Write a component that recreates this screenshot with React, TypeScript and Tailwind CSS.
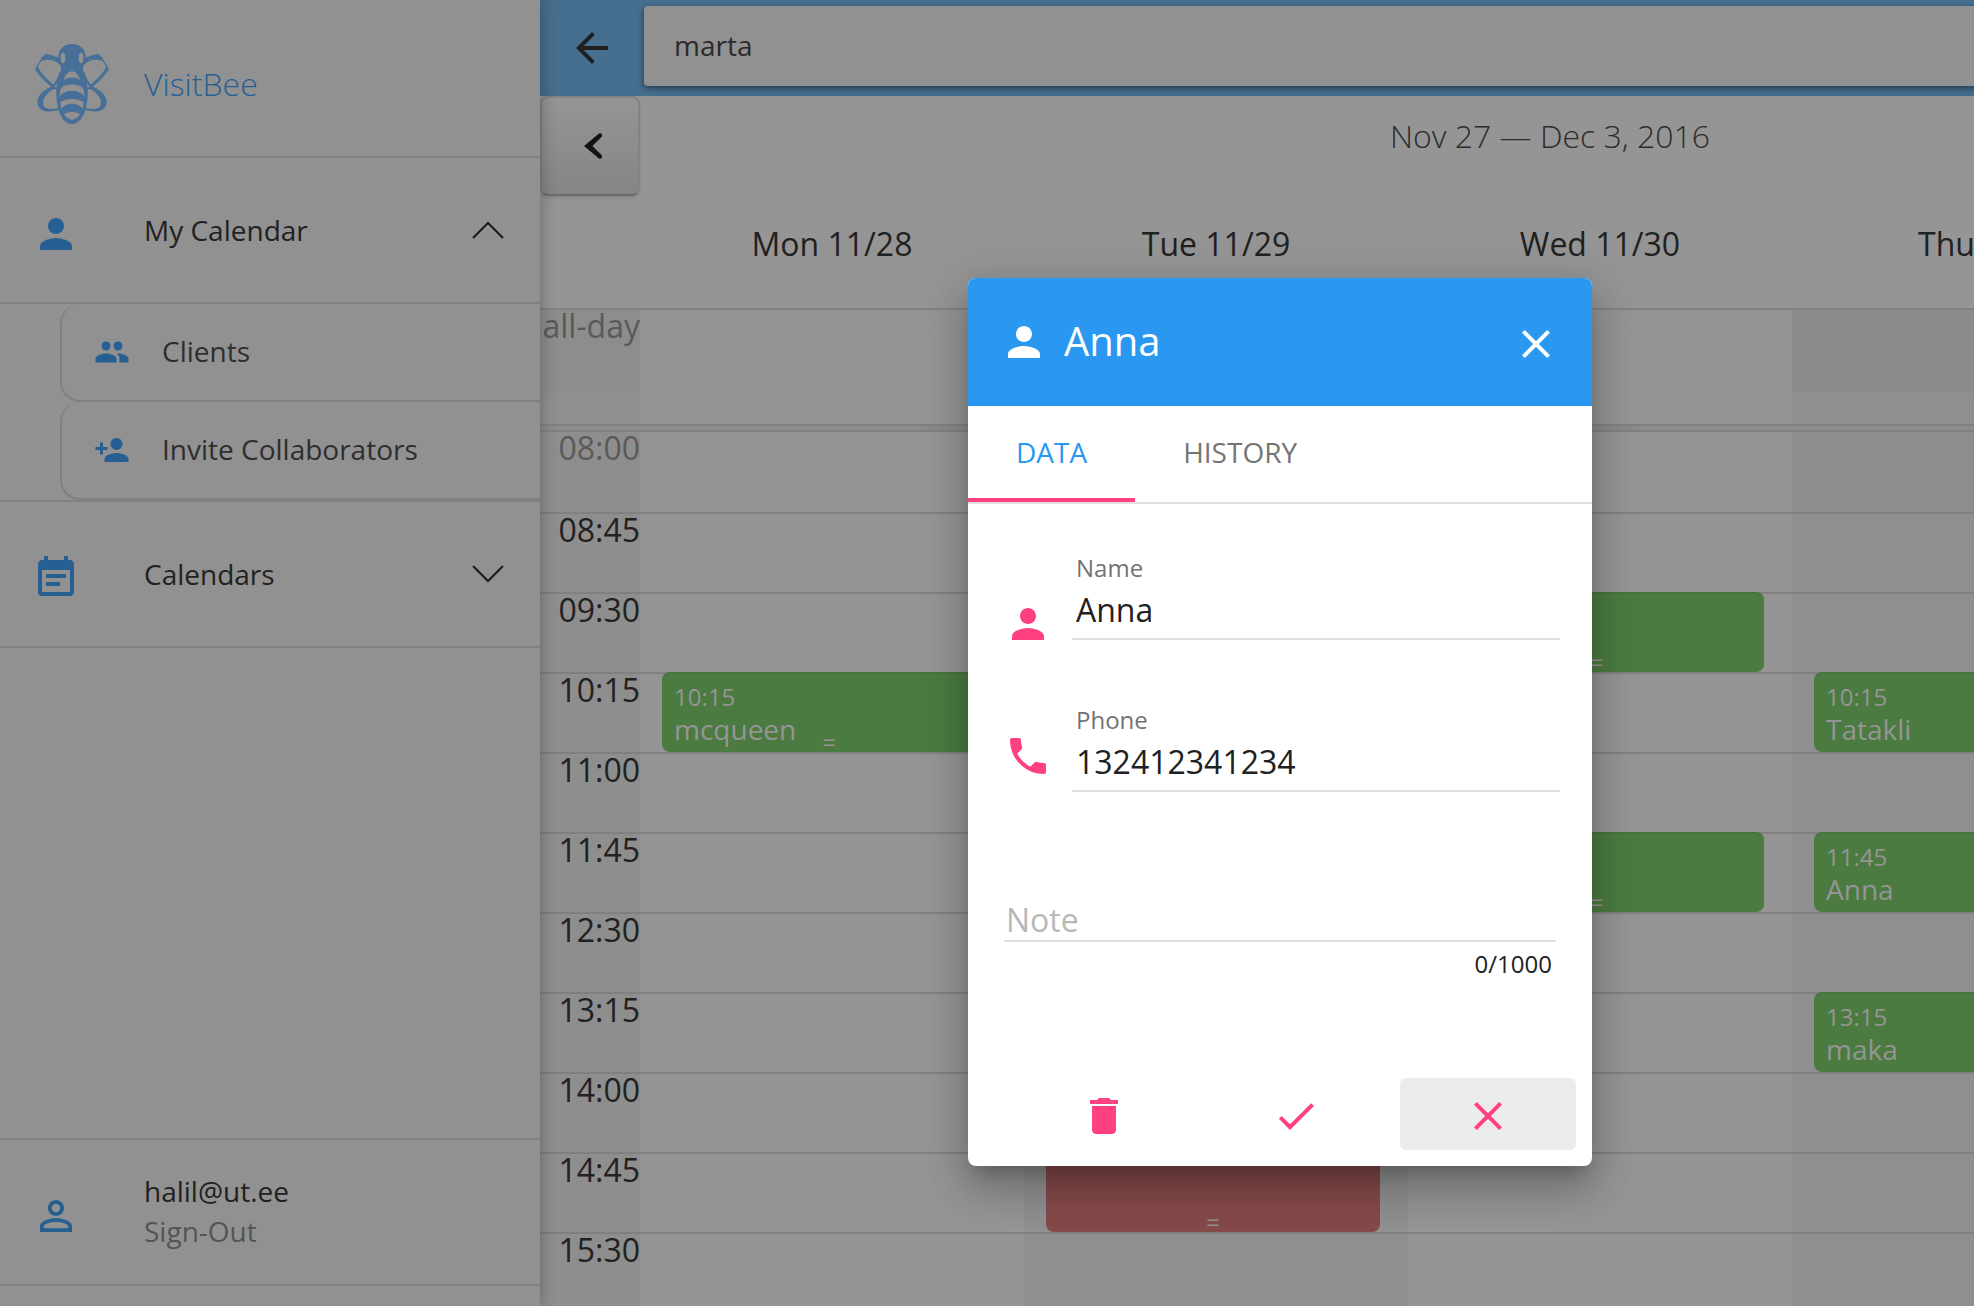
import React from 'react';
import {
  MdPerson,
  MdPeople,
  MdPersonAdd,
  MdEventNote,
  MdPersonOutline,
  MdArrowBack,
  MdClose,
  MdCheck,
  MdDelete,
  MdPhone,
} from 'react-icons/md';

type CalendarEvent = { time?: string; title?: string; tone: 'green' | 'red' };

const days = ['Mon 11/28', 'Tue 11/29', 'Wed 11/30', 'Thu 12/1', 'Fri 12/2'];
const shaded = [false, true, false, true, false];

const slots = [
  '08:00', '08:45', '09:30', '10:15', '11:00', '11:45',
  '12:30', '13:15', '14:00', '14:45', '15:30',
];

const events: Record<string, CalendarEvent> = {
  '10:15-0': { time: '10:15', title: 'mcqueen', tone: 'green' },
  '14:45-1': { tone: 'red' },
  '09:30-2': { tone: 'green' },
  '11:45-2': { tone: 'green' },
  '10:15-3': { time: '10:15', title: 'Tatakli', tone: 'green' },
  '11:45-3': { time: '11:45', title: 'Anna', tone: 'green' },
  '13:15-3': { time: '13:15', title: 'maka', tone: 'green' },
};

function BeeWing() {
  return (
    <g>
      <path
        fill="#476f97"
        fillRule="evenodd"
        d="M120 84 C106 80 94 74 78 71 L66 82 L45 118 C54 134 76 156 94 170 C74 178 54 192 52 214 C51 230 62 240 76 244 C92 245 106 243 118 240 L114 234 C100 237 88 238 78 234 C68 230 67 218 72 206 C80 190 94 180 106 174 L102 166 C84 150 66 134 55 114 C54 102 62 92 76 90 C92 87 108 92 120 104 Z"
      />
      <path fill="none" stroke="#476f97" strokeWidth="7" d="M99 170 C108 160 116 148 122 132" />
      <path fill="none" stroke="#476f97" strokeWidth="6" d="M98 171 L114 178" />
    </g>
  );
}

function BeeLogo() {
  return (
    <svg viewBox="45 42 222 240" className="h-20 w-[74px]" aria-hidden="true">
      <BeeWing />
      <g transform="translate(312 0) scale(-1 1)">
        <BeeWing />
      </g>
      <path
        fill="#476f97"
        d="M156 42 C132 42 115 58 115 82 C115 98 122 104 124 118 C112 140 108 168 109 198 C111 244 128 282 156 282 C184 282 201 244 203 198 C204 168 200 140 188 118 C190 104 197 98 197 82 C197 58 180 42 156 42 Z"
      />
      <g fill="#919191">
        <ellipse cx="129" cy="84" rx="7" ry="16" />
        <ellipse cx="183" cy="84" rx="7" ry="16" />
        <path d="M132 150 C136 134 144 125 156 124 C168 125 176 134 180 150 C166 140 146 140 132 150 Z" />
        <path d="M123 174 C140 160 172 160 189 174 C192 182 193 190 193 199 C176 177 136 177 119 199 C119 190 120 182 123 174 Z" />
        <path d="M121 216 C140 204 172 204 191 216 L189 236 C172 216 140 216 123 236 Z" />
        <path d="M132 252 C146 244 166 244 180 252 C174 262 166 269 156 269 C146 269 138 262 132 252 Z" />
      </g>
    </svg>
  );
}

function Chevron({ up }: { up?: boolean }) {
  return (
    <svg viewBox="0 0 32 18" className="h-[18px] w-8" fill="none" stroke="#1a1a1a" strokeWidth="2" aria-hidden="true">
      <path d={up ? 'M1 17 L16 2 L31 17' : 'M1 1 L16 16 L31 1'} />
    </svg>
  );
}

function Sidebar() {
  return (
    <aside className="relative z-10 flex w-[540px] shrink-0 flex-col bg-[#919191] pb-5 text-[28px] leading-10 text-[#212121] shadow-[0_0_16px_rgba(0,0,0,0.3)]">
      <div className="flex h-[158px] items-center gap-[35px] border-b-2 border-[#808080] pt-3 pl-[35px]">
        <BeeLogo />
        <span className="text-[32px] font-light text-[#265f94]">VisitBee</span>
      </div>
      <nav>
        <button className="flex h-[146px] w-full items-center border-b-2 border-[#808080] pr-9 pl-8 text-left">
          <MdPerson className="mt-2 mr-16 size-12 text-[#265f91]" />
          <span className="grow">My Calendar</span>
          <Chevron up />
        </button>
        <ul className="border-b-2 border-[#808080] pl-[60px] text-[#2e2e2e]">
          <li>
            <a href="#clients" className="flex h-[98px] items-center gap-8 rounded-l-[20px] border-b-2 border-l-2 border-[#808080] pl-8">
              <MdPeople className="size-9 text-[#265f91]" />
              <span className="pb-0.5">Clients</span>
            </a>
          </li>
          <li>
            <a href="#invite" className="flex h-[98px] items-center gap-8 rounded-l-[20px] border-b-2 border-l-2 border-[#808080] pl-8">
              <MdPersonAdd className="size-9 text-[#265f91]" />
              <span className="pb-0.5">Invite Collaborators</span>
            </a>
          </li>
        </ul>
        <button className="flex h-[146px] w-full items-center border-b-2 border-[#808080] pr-9 pl-8 text-left">
          <MdEventNote className="mt-2 mr-16 size-12 text-[#265f91]" />
          <span className="grow">Calendars</span>
          <Chevron />
        </button>
      </nav>
      <div className="mt-auto flex h-[148px] items-center border-y-2 border-[#808080] pl-8">
        <MdPersonOutline className="mt-2 mr-16 size-12 text-[#265f91]" />
        <div className="pb-0.5">
          <div>halil@ut.ee</div>
          <a href="#sign-out" className="block text-[#555555]">Sign-Out</a>
        </div>
      </div>
    </aside>
  );
}

function EventCard({ event }: { event: CalendarEvent }) {
  const tone = event.tone === 'green' ? 'border-[#46743c] bg-[#4b7b41]' : 'border-[#7d4545] bg-[#854a4a]';
  return (
    <div className={`relative -mt-0.5 ml-[22px] h-20 w-[334px] rounded-lg border-t-2 pt-[7px] pl-3 text-left text-[#959595] ${tone}`}>
      <div className="text-2xl leading-8">{event.time}</div>
      <div className="text-[28px] leading-8">{event.title}</div>
      <span className="absolute inset-x-0 bottom-0 text-center text-2xl leading-5">=</span>
    </div>
  );
}

function Calendar() {
  return (
    <main className="w-[2020px] shrink-0 bg-[#959595] text-[32px] text-[#212121]">
      <div className="flex h-24 items-center bg-[#466e8e] pl-7">
        <button aria-label="Back" className="mr-7">
          <MdArrowBack className="size-12 text-[#1e2022]" />
        </button>
        <input
          aria-label="Search"
          defaultValue="marta"
          className="mb-1 h-20 grow rounded bg-[#919191] pb-0.5 pl-[30px] text-[28px] text-[#2a2a2a] shadow-[0_2px_6px_rgba(0,0,0,0.5)] outline-none"
        />
      </div>
      <div className="grid h-[100px] grid-cols-[100px_1fr_100px]">
        <button
          aria-label="Previous week"
          className="flex items-center justify-center rounded-lg border-2 border-[#838383] border-b-[#6c6c6c] bg-linear-to-b from-[#959595] to-[#858585] pl-1.5 shadow-[0_2px_4px_rgba(0,0,0,0.1)]"
        >
          <svg viewBox="0 0 18 26" className="h-[26px] w-[18px]" fill="#131313" aria-hidden="true">
            <path d="M0 13 L15 0.6 Q17 -0.2 18 1.6 L18 3.4 L8.4 13 L18 22.6 L18 24.4 Q17 26.2 15 25.4 Z" />
          </svg>
        </button>
        <h1 className="pt-[18px] text-center leading-[44px] font-light text-[#2c2c2c]">Nov 27 — Dec 3, 2016</h1>
      </div>
      <table className="w-full table-fixed border-separate border-spacing-0">
        <thead>
          <tr className="h-28">
            <th className="w-[100px] p-0" />
            {days.map((day) => (
              <th key={day} className="p-0 pt-[26px] align-top leading-[44px] font-normal">{day}</th>
            ))}
          </tr>
        </thead>
        <tbody>
          <tr className="h-[116px] text-[#5a5a5a]">
            <th className="border-t-2 border-[#828282] bg-linear-to-b from-[#8d8d8d] from-70% to-[#909090] to-75% p-0 text-right align-top leading-8 font-normal">all-day</th>
            {days.map((day, i) => (
              <td key={day} className={`border-t-2 border-[#828282] p-0 ${shaded[i] ? 'bg-linear-to-b from-[#8c8c8c] from-70% to-[#909090] to-75%' : ''}`} />
            ))}
          </tr>
          <tr className="h-1.5">
            <td colSpan={6} className="border-t-2 border-[#828282] bg-[#8c8c8c] p-0" />
          </tr>
          {slots.map((slot, row) => (
            <tr key={slot} className={row === 0 ? 'h-[82px]' : 'h-20'}>
              <th
                className={`border-t-2 border-[#808080] bg-[#8e8e8e] p-0 text-right align-top leading-8 font-normal ${row === 0 ? 'text-[#5a5a5a]' : ''}`}
              >
                {slot}
              </th>
              {days.map((day, i) => {
                const event = events[`${slot}-${i}`];
                const shade = row === 0 ? 'bg-[#8d8d8d]' : 'bg-[#909090]';
                return (
                  <td key={day} className={`border-t-2 border-[#808080] p-0 align-top ${shaded[i] ? shade : ''}`}>
                    {event && <EventCard event={event} />}
                  </td>
                );
              })}
            </tr>
          ))}
        </tbody>
      </table>
    </main>
  );
}

function ClientDialog() {
  return (
    <div
      role="dialog"
      aria-label="Anna"
      className="w-[624px] overflow-hidden rounded-lg bg-white text-[#212121] shadow-[0_14px_16px_-8px_rgba(0,0,0,0.2),0_26px_38px_4px_rgba(0,0,0,0.14),0_10px_48px_8px_rgba(0,0,0,0.12)]"
    >
      <header className="flex h-32 items-center bg-[#2a98f0] px-8 text-white">
        <MdPerson className="size-12" />
        <h2 className="ml-4 grow pb-0.5 text-[40px] leading-[56px]">Anna</h2>
        <button aria-label="Close" className="mt-1">
          <MdClose className="size-12" />
        </button>
      </header>
      <div role="tablist" className="flex h-[98px] border-b-2 border-[#e0e0e0] text-[28px]">
        <button role="tab" aria-selected="true" className="border-b-4 border-[#ff4081] px-12 text-[#2a98f0]">DATA</button>
        <button role="tab" aria-selected="false" className="border-b-4 border-transparent px-12 text-[#757575]">HISTORY</button>
      </div>
      <form className="pt-12">
        <div className="flex items-start gap-5 pr-8 pl-9">
          <MdPerson className="mt-12 -mb-2 size-12 shrink-0 text-[#ff4081]" />
          <div className="grow">
            <label htmlFor="name" className="block pl-1 text-2xl leading-8 text-[#737373]">Name</label>
            <input id="name" defaultValue="Anna" className="block h-14 w-full border-b-2 border-[#e0e0e0] pb-1 pl-1 text-[32px] font-medium outline-none" />
          </div>
        </div>
        <div className="mt-16 flex items-start gap-5 pr-8 pl-9">
          <MdPhone className="mt-7 size-12 shrink-0 text-[#ff4081]" />
          <div className="grow">
            <label htmlFor="phone" className="block pl-1 text-2xl leading-8 text-[#737373]">Phone</label>
            <input id="phone" defaultValue="132412341234" className="block h-14 w-full border-b-2 border-[#e0e0e0] pb-1 pl-1 text-[32px] font-medium outline-none" />
          </div>
        </div>
        <div className="mt-[102px] px-9">
          <textarea
            aria-label="Note"
            rows={1}
            placeholder="Note"
            className="block h-12 w-full resize-none overflow-hidden border-b-2 border-[#e0e0e0] pt-1.5 pl-0.5 text-[32px] leading-10 font-medium outline-none placeholder:text-[#b8b8b8]"
          />
          <div className="mt-1.5 pr-1 text-right text-2xl leading-8">0/1000</div>
        </div>
        <div className="mt-[98px] flex justify-end gap-4 pr-4 pb-4 text-[#ff4081]">
          <button type="button" aria-label="Delete" className="flex h-[72px] w-44 items-center justify-center rounded-md pt-1">
            <MdDelete className="size-12" />
          </button>
          <button type="button" aria-label="Save" className="flex h-[72px] w-44 items-center justify-center rounded-md pt-1">
            <MdCheck className="size-12" />
          </button>
          <button type="button" aria-label="Cancel" className="flex h-[72px] w-44 items-center justify-center rounded-md bg-[#ebebeb] pt-1">
            <MdClose className="size-12" />
          </button>
        </div>
      </form>
    </div>
  );
}

export default function App() {
  return (
    <div className="relative flex h-screen overflow-hidden bg-[#959595] font-['Open_Sans','Noto_Sans',sans-serif]">
      <Sidebar />
      <Calendar />
      <div className="absolute top-0 left-0 z-20 flex w-[2560px] justify-center pt-[278px]">
        <ClientDialog />
      </div>
    </div>
  );
}
